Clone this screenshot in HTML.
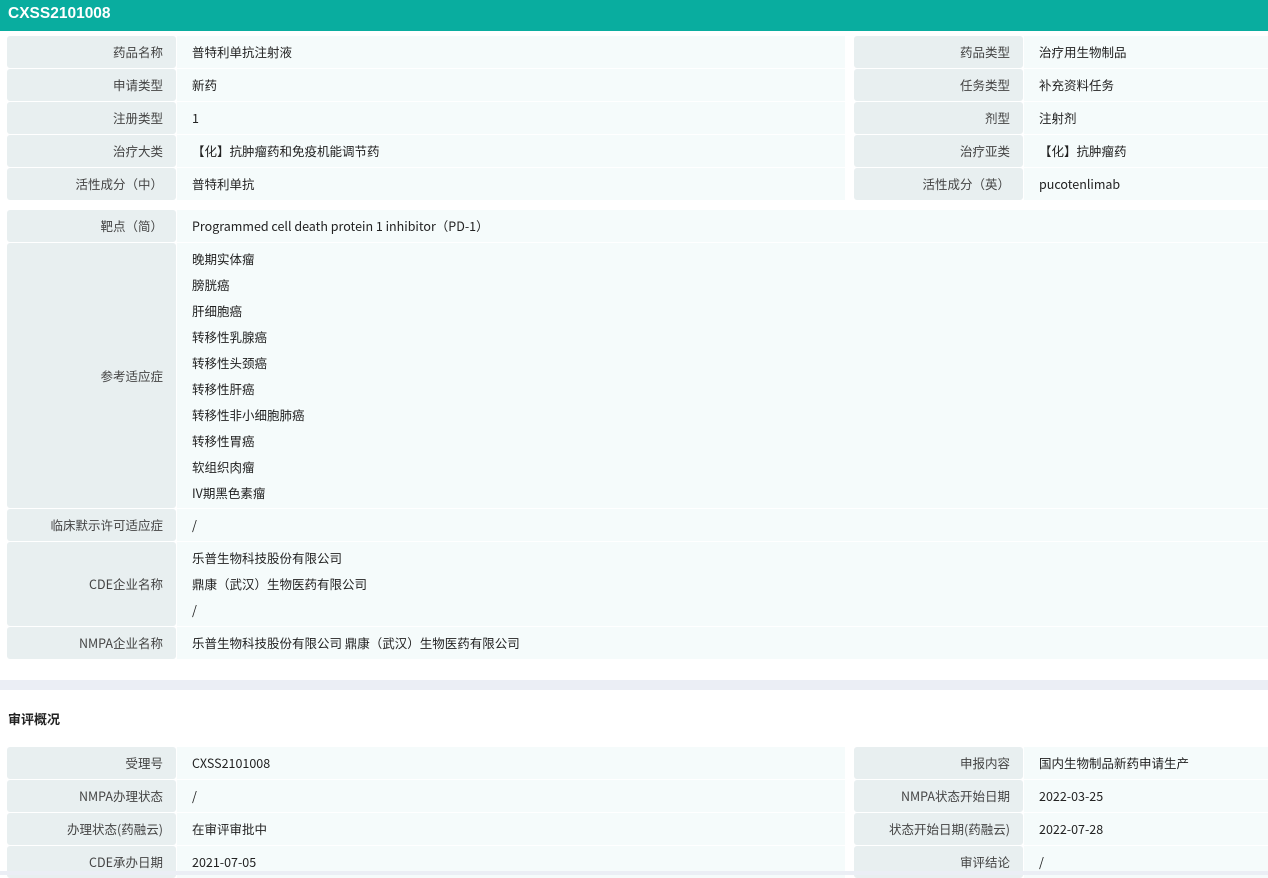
<!DOCTYPE html>
<html><head><meta charset="utf-8"><style>
*{margin:0;padding:0;box-sizing:border-box}
body{width:1268px;height:875px;overflow:hidden;background:#fff;font-family:"Noto Sans CJK SC","Liberation Sans",sans-serif;font-size:12.5px;color:#222;position:relative}
.hd{height:31px;background:#09ad9f;color:#fff;font-weight:bold;font-size:15.5px;line-height:27px;padding-left:8px;font-family:"Liberation Sans",sans-serif}
.row{position:absolute;display:flex}
.l{background:#e8eff0;color:#444;text-align:right;padding-right:13px;border-radius:3px;line-height:32px}
.v{background:#f5fbfb;padding-left:15px;line-height:32px;white-space:nowrap}
.v.m{display:flex;flex-direction:column;justify-content:center}
.v.m div{height:26px;line-height:26px}
</style></head><body>
<div class="hd">CXSS2101008</div>
<div id="c"></div>
<div style="position:absolute;left:0;top:680px;width:1268px;height:10px;background:#ebeef5"></div>
<div style="position:absolute;left:8px;top:709px;font-weight:bold;font-size:13px">审评概况</div>
<div style="position:absolute;left:0;top:871px;width:1268px;height:4px;background:#ebeef5;z-index:5"></div>
<script>
var H='';
function pair(y,h,l1,v1,l2,v2){
 H+='<div class="row" style="left:7px;top:'+y+'px;height:'+h+'px"><div class="l" style="width:169px">'+l1+'</div><div class="v" style="width:668px;margin-left:1px">'+v1+'</div></div>';
 H+='<div class="row" style="left:854px;top:'+y+'px;height:'+h+'px"><div class="l" style="width:169px">'+l2+'</div><div class="v" style="width:245px;margin-left:1px">'+v2+'</div></div>';
}
function full(y,h,l,v,m){
 H+='<div class="row" style="left:7px;top:'+y+'px;height:'+h+'px"><div class="l" style="width:169px;line-height:'+h+'px">'+l+'</div><div class="v'+(m?' m':'')+'" style="width:1091px;margin-left:1px">'+v+'</div></div>';
}
var a=[["药品名称","普特利单抗注射液","药品类型","治疗用生物制品"],["申请类型","新药","任务类型","补充资料任务"],["注册类型","1","剂型","注射剂"],["治疗大类","【化】抗肿瘤药和免疫机能调节药","治疗亚类","【化】抗肿瘤药"],["活性成分（中）","普特利单抗","活性成分（英）","pucotenlimab"]];
a.forEach(function(r,i){pair(36+33*i,32,r[0],r[1],r[2],r[3])});
full(210,32,"靶点（简）","Programmed cell death protein 1 inhibitor（PD-1）");
var ind=["晚期实体瘤","膀胱癌","肝细胞癌","转移性乳腺癌","转移性头颈癌","转移性肝癌","转移性非小细胞肺癌","转移性胃癌","软组织肉瘤","IV期黑色素瘤"];
full(243,265,"参考适应症",ind.map(function(s){return '<div>'+s+'</div>'}).join(''),1);
full(509,32,"临床默示许可适应症","/");
full(542,84,"CDE企业名称",["乐普生物科技股份有限公司","鼎康（武汉）生物医药有限公司","/"].map(function(s){return '<div>'+s+'</div>'}).join(''),1);
full(627,32,"NMPA企业名称","乐普生物科技股份有限公司 鼎康（武汉）生物医药有限公司");
var b=[["受理号","CXSS2101008","申报内容","国内生物制品新药申请生产"],["NMPA办理状态","/","NMPA状态开始日期","2022-03-25"],["办理状态(药融云)","在审评审批中","状态开始日期(药融云)","2022-07-28"],["CDE承办日期","2021-07-05","审评结论","/"]];
b.forEach(function(r,i){pair(747+33*i,32,r[0],r[1],r[2],r[3])});
document.getElementById('c').innerHTML=H;
</script>
</body></html>
